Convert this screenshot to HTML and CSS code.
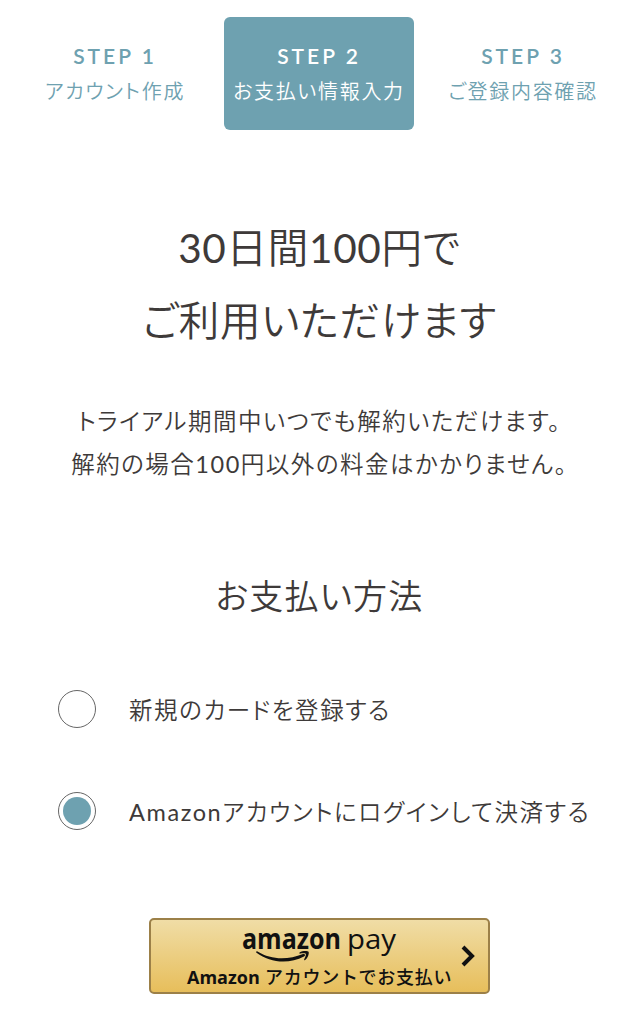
FILE: index.html
```html
<!DOCTYPE html>
<html lang="ja">
<head>
  <meta charset="UTF-8" />
  <meta name="viewport" content="width=device-width, initial-scale=1.0" />
  <title>お支払い情報入力</title>
  <link rel="stylesheet" href="styles.css">
</head>
<body>
  <ol class="steps">
    <li class="step"><b>STEP 1</b><span>アカウント作成</span></li>
    <li class="step active"><b>STEP 2</b><span>お支払い情報入力</span></li>
    <li class="step"><b>STEP 3</b><span>ご登録内容確認</span></li>
  </ol>

  <h1>30日間100円で<br>ご利用いただけます</h1>
  <p class="lead">トライアル期間中いつでも解約いただけます。<br>解約の場合100円以外の料金はかかりません。</p>

  <h2>お支払い方法</h2>
  <form class="methods">
    <label>
      <input type="radio" name="method" />
      <span>新規のカードを登録する</span>
    </label>
    <label>
      <input type="radio" name="method" checked />
      <span>Amazonアカウントにログインして決済する</span>
    </label>
    <button type="button" class="amazon">
      <span class="label">
        <svg class="logo" width="156" height="42" viewBox="0 0 156 42">
          <text class="brand" x="0" y="27" textLength="99" lengthAdjust="spacingAndGlyphs">amazon</text>
          <text class="pay" x="105" y="27" textLength="49" lengthAdjust="spacingAndGlyphs">pay</text>
          <path d="M15.500 29.500 C29 38 46 38 61 32 C63 31.500 64 33 62 34.500 C47 42.500 28 41 14.500 30.800 C13.500 30 14.500 29 15.500 29.500Z" />
          <path d="M57.500 30.500 C61 28.300 66 28.800 66.700 30 C67.200 32 65.800 36 63.200 38 C62 38.500 62 38 62.300 37 C63.600 34.500 64.200 32.500 63.700 31.800 C62.700 31 60.500 31.300 57.500 31.700Z" />
        </svg>
        <span class="caption"><b>Amazon</b> アカウントでお支払い</span>
      </span>
      <svg class="arrow" width="16" height="22" viewBox="0 0 16 22">
        <path d="M3 2 L12 11 L3 20" />
      </svg>
    </button>
  </form>
</body>
</html>
```
FILE: styles.css
```css
* { box-sizing: border-box; }
body { margin: 0; background: #fff; color: #3e3a39; font-family: Lato, "Noto Sans CJK JP DemiLight", "Noto Sans CJK JP", sans-serif; font-feature-settings: "palt"; text-align: center; }
.steps { display: grid; grid-template-columns: 190px 190px 190px; column-gap: 14px; justify-content: center; margin: 0; padding: 17px 1px 0 0; list-style: none; }
.step { height: 113px; padding-top: 24px; border-radius: 6px; color: #6ea1b0; white-space: nowrap; }
.step b, .step span { display: block; }
.step b { font-size: 21px; font-weight: 600; line-height: 30px; letter-spacing: 3px; }
.step span { font-size: 20px; font-weight: 300; line-height: 40px; letter-spacing: 1.7px; }
.active { background: #6ea1b0; color: #fff; }
h1 { margin: 81px 0 0; font-size: 40.5px; font-weight: 400; line-height: 73px; letter-spacing: 0.7px; }
.lead { margin: 43px 0 0; font-size: 23.5px; line-height: 43px; letter-spacing: 1.5px; white-space: nowrap; }
h2 { margin: 80px 0 0; font-size: 34px; font-weight: 400; line-height: 60px; letter-spacing: 1.2px; }
.methods { padding: 63px 40px 0 58px; }
.methods label { display: flex; align-items: center; height: 40px; margin-bottom: 62px; gap: 33px; font-size: 23.5px; letter-spacing: 1.6px; white-space: nowrap; }
.methods input { flex: none; width: 38px; height: 38px; margin: 0; appearance: none; border: 1px solid #666; border-radius: 50%; background: #fff; }
.methods input:checked { padding: 4px; background: #6ea1b0 content-box; }
.amazon { display: flex; align-items: center; width: 341px; height: 76px; margin: 87px 0 0 91px; padding: 0 12px 0 36px; border: 2px solid #9c8048; border-radius: 5px; background: linear-gradient(#f0dda6, #e7be5b); color: #111; }
.label { flex: 1; text-align: left; }
.logo { display: block; overflow: visible; margin-left: 55px; fill: #111; }
.brand { font: 700 28px "Open Sans", sans-serif; }
.pay { font: 500 28px "Open Sans", sans-serif; }
.caption { display: block; font: 500 18px/26px "Open Sans", "Noto Sans CJK JP", sans-serif; letter-spacing: 0.7px; white-space: nowrap; }
.caption b { font-weight: 700; letter-spacing: 0; }
.arrow { flex: none; fill: none; stroke: #111; stroke-width: 4; }
```
